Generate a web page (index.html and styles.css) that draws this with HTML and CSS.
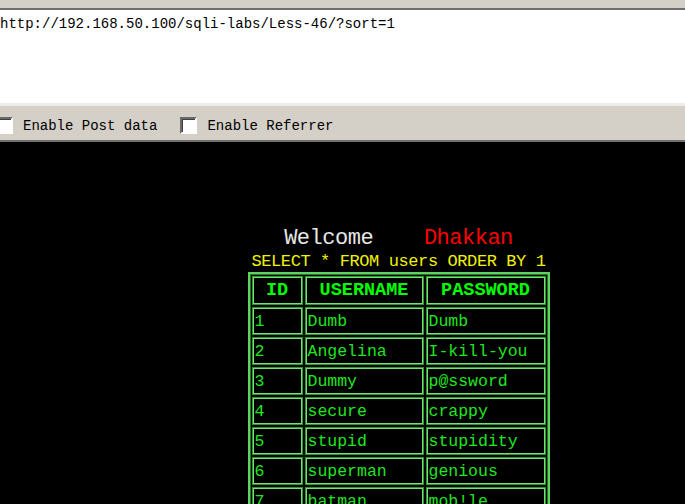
FILE: index.html
```html
<!DOCTYPE html>
<html lang="en">
<head>
    <meta charset="UTF-8">
    <title>Less-46 Sort</title>
    <link rel="stylesheet" href="styles.css">
</head>
<body>
    <div class="top-strip"></div>
    <div class="url-box">http://192.168.50.100/sqli-labs/Less-46/?sort=1</div>

    <div class="toolbar">
        <label class="opt first"><span class="check"></span>Enable Post data</label>
        <label class="opt"><span class="check"></span>Enable Referrer</label>
    </div>

    <div class="page">
        <div class="welcome">Welcome&nbsp;&nbsp;&nbsp;&nbsp;<span class="name">Dhakkan</span></div>
        <div class="query">SELECT * FROM users ORDER BY 1</div>

        <table class="users">
            <tr>
                <th class="c-id">ID</th>
                <th class="c-user">USERNAME</th>
                <th class="c-pass">PASSWORD</th>
            </tr>
            <tr><td>1</td><td>Dumb</td><td>Dumb</td></tr>
            <tr><td>2</td><td>Angelina</td><td>I-kill-you</td></tr>
            <tr><td>3</td><td>Dummy</td><td>p@ssword</td></tr>
            <tr><td>4</td><td>secure</td><td>crappy</td></tr>
            <tr><td>5</td><td>stupid</td><td>stupidity</td></tr>
            <tr><td>6</td><td>superman</td><td>genious</td></tr>
            <tr><td>7</td><td>batman</td><td>mob!le</td></tr>
        </table>
    </div>
</body>
</html>
```

FILE: styles.css
```css
html, body {
    margin: 0;
    padding: 0;
    overflow: hidden;
    background: #000;
}
body {
    width: 685px;
    height: 504px;
}

/* browser chrome bits */
.top-strip {
    height: 8px;
    background: #d4d0c8;
    border-bottom: 2px solid #6f6f6f;
}
.url-box {
    height: 87px;
    background: #fff;
    padding-top: 6px;
    font-family: "Liberation Mono", "DejaVu Sans Mono", monospace;
    font-size: 14px;
    line-height: 16px;
    color: #000;
    white-space: nowrap;
}
.toolbar {
    display: flex;
    align-items: center;
    height: 34px;
    background: #d4d0c8;
    border-top: 3px solid #eeece6;
    border-bottom: 2px solid #6f6f6f;
    font-family: "Liberation Mono", "DejaVu Sans Mono", monospace;
    font-size: 14px;
    color: #000;
}
.opt {
    display: flex;
    align-items: center;
    gap: 10px;
    margin-left: 23px;
    padding-top: 5px;
}
.opt.first {
    margin-left: -4px;
}
.check {
    width: 13px;
    height: 13px;
    background: #fff;
    border: 2px solid;
    border-color: #6a6a6a #fff #fff #6a6a6a;
    box-shadow: inset 1px 1px 0 #404040;
}

/* page */
.page {
    width: 573px;
    padding-left: 112px;
    padding-top: 83px;
    text-align: center;
    font-family: "Liberation Mono", "DejaVu Sans Mono", monospace;
}
.welcome {
    font-size: 22px;
    line-height: 27px;
    letter-spacing: -0.5px;
    color: #e6e6e6;
}
.welcome .name {
    color: #ff0000;
}
.query {
    font-size: 17px;
    line-height: 20px;
    letter-spacing: -0.4px;
    color: #f2f200;
}

.users {
    margin: 0 auto;
    table-layout: fixed;
    border-collapse: separate;
    border-spacing: 2px;
    border: 2px solid #5fd35f;
    box-shadow: inset 0 0 0 1px #1f7a1f;
}
.users th,
.users td {
    box-sizing: border-box;
    border: 1px solid #2c962c;
    box-shadow: inset 0 0 0 1px #79e079;
    padding: 0 2px;
}
.users th {
    height: 29px;
    font-size: 18.5px;
    font-weight: bold;
    color: #00ff00;
    text-align: center;
}
.users td {
    height: 28px;
    font-size: 16.5px;
    color: #1fe61f;
    text-align: left;
}
.c-id { width: 51px; }
.c-user { width: 119px; }
.c-pass { width: 120px; }
```
